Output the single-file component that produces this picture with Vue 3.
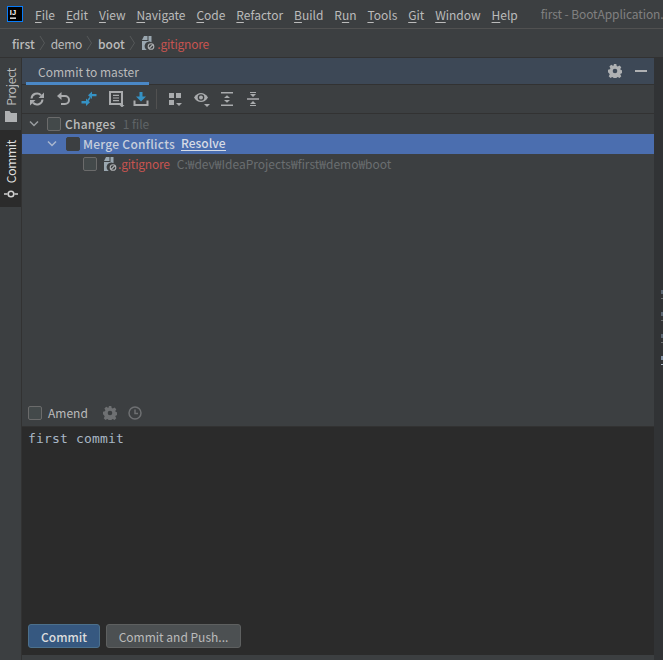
<script setup>
const menus = [
  ['F', 'ile'], ['E', 'dit'], ['V', 'iew'], ['N', 'avigate'], ['C', 'ode'], ['R', 'efactor'],
  ['B', 'uild'], ['R', 'un', 1], ['T', 'ools'], ['G', 'it'], ['W', 'indow'], ['H', 'elp']
]
</script>

<template>
  <div class="app">
    <header class="menubar">
      <svg class="logo" width="16" height="16" viewBox="0 0 16 16">
        <rect x="0.5" y="0.5" width="15" height="15" fill="#000" stroke="#087cfa" />
        <rect x="3" y="11.500" width="6" height="1.300" fill="#fff" />
        <text x="2.800" y="8.600" font-size="7.500" font-weight="700" font-family="Liberation Sans" fill="#fff">IJ</text>
      </svg>
      <nav class="menus">
        <span v-for="m in menus" :key="m[0] + m[1]" class="menu">
          <template v-if="m[2]">R<u>u</u>n</template>
          <template v-else><u>{{ m[0] }}</u>{{ m[1] }}</template>
        </span>
      </nav>
      <span class="title">first - BootApplication.</span>
    </header>

    <div class="crumbs">
      <b>first</b>
      <svg class="sep" width="7" height="16" viewBox="0 0 7 16"><path d="M1 1l4.500 7L1 15" fill="none" stroke="#555859" /></svg>
      <span class="demo">demo</span>
      <svg class="sep" width="7" height="16" viewBox="0 0 7 16"><path d="M1 1l4.500 7L1 15" fill="none" stroke="#555859" /></svg>
      <b>boot</b>
      <svg class="sep" width="7" height="16" viewBox="0 0 7 16"><path d="M1 1l4.500 7L1 15" fill="none" stroke="#555859" /></svg>
      <svg class="file" width="14" height="16" viewBox="0 0 14 16">
        <path d="M3 1h3.500v4H1zM7.500 1l3 0v6.200a4 4 0 0 0-4.700 7.800H1V6h6.500z" fill="#9aa7b0" />
        <circle cx="10" cy="11.500" r="2.800" fill="none" stroke="#afb1b3" stroke-width="1.100" />
        <path d="M8 13.500l4-4" stroke="#afb1b3" stroke-width="1.100" />
      </svg>
      <span class="red">.gitignore</span>
    </div>

    <div class="body">
      <aside class="strip">
        <div class="vtab">
          <span>Project</span>
          <svg width="14" height="12" viewBox="0 0 14 12"><path d="M1 0h4.500l1.500 2h6v9H1z" fill="#afb1b3" /></svg>
        </div>
        <div class="vtab active">
          <span>Commit</span>
          <svg width="14" height="12" viewBox="0 0 14 12">
            <circle cx="7" cy="6" r="2.800" fill="none" stroke="#d0d0d0" stroke-width="1.600" />
            <path d="M0 6h3.500M10.500 6H14" stroke="#d0d0d0" stroke-width="1.600" />
          </svg>
        </div>
      </aside>

      <main class="panel">
        <div class="tabhead">
          <div class="tab">Commit to master</div>
          <div class="headicons">
            <svg width="14" height="14" viewBox="0 0 14 14">
              <path d="M5.700 0h2.600l.4 1.900 1.100.5 1.700-1 1.800 1.800-1 1.700.5 1.100 1.900.4v2.600l-1.900.4-.5 1.100 1 1.700-1.800 1.800-1.700-1-1.100.5-.4 1.900H5.700l-.4-1.900-1.100-.5-1.700 1-1.800-1.800 1-1.700-.5-1.100L0 8.300V5.700l1.900-.4.500-1.100-1-1.700 1.800-1.800 1.700 1 1.100-.5z" fill="#afb1b3" />
              <circle cx="7" cy="7" r="2.300" fill="#3d4856" />
            </svg>
            <svg width="12" height="14" viewBox="0 0 12 14"><rect y="6" width="12" height="2" fill="#afb1b3" /></svg>
          </div>
        </div>

        <div class="toolbar">
          <span class="slot">
            <svg width="16" height="16" viewBox="0 0 16 16" fill="none" stroke="#a9abad" stroke-width="2">
              <path d="M2.500 7.500a5.500 5.500 0 0 1 9.500-3.300M13.500 8.500a5.500 5.500 0 0 1-9.500 3.300" />
              <path d="M9.500 7H15V1.500zM6.500 9H1v5.500z" fill="#a9abad" stroke="none" />
            </svg>
          </span>
          <span class="slot">
            <svg width="16" height="16" viewBox="0 0 16 16" fill="none">
              <path d="M5 5h5a4 4 0 0 1 0 8H6" stroke="#a9abad" stroke-width="2" />
              <path d="M6.500 1v8L2 5z" fill="#a9abad" />
            </svg>
          </span>
          <span class="slot">
            <svg width="16" height="16" viewBox="0 0 16 16" fill="#3592c4">
              <path d="M11 .5V8L7 4.200zM11 3h4.500v2.300H11zM5 7.500V15l4-3.800zM.500 10h4.500v2.500H.500z" />
              <path d="M9 6.500L7 9.500" stroke="#3592c4" stroke-width="1.500" />
            </svg>
          </span>
          <span class="slot shifted">
            <svg width="16" height="16" viewBox="0 0 16 16">
              <path d="M1 1h12v12H1z" fill="none" stroke="#a9abad" stroke-width="2" />
              <path d="M4 4.300h6M4 7h6M4 9.700h6" stroke="#a9abad" stroke-width="1.200" />
              <path d="M10.500 14h5L13 16.500z" fill="#a9abad" />
            </svg>
          </span>
          <span class="slot">
            <svg width="16" height="16" viewBox="0 0 16 16">
              <path d="M6.500 1h3v4.500H13L8 10.500l-5-5h3.500z" fill="#3592c4" />
              <path d="M1.500 9.500v4.500h13V9.500" fill="none" stroke="#a9abad" stroke-width="2" />
            </svg>
          </span>
          <i class="divider"></i>
          <span class="slot">
            <svg width="16" height="16" viewBox="0 0 16 16">
              <path d="M1 2h5v5H1zM8 2h5v5H8zM1 9h5v5H1z" fill="#a9abad" />
              <path d="M8 12h6l-3 3z" fill="#a9abad" />
            </svg>
          </span>
          <span class="slot narrow">
            <svg width="16" height="16" viewBox="0 0 16 16">
              <path d="M0 6.500c3.500-6 10.500-6 14 0-3.500 6-10.500 6-14 0z" fill="#a9abad" />
              <circle cx="7" cy="6.500" r="3.300" fill="#3c3f41" />
              <circle cx="7" cy="6.500" r="2" fill="#a9abad" />
              <path d="M10 13h6l-3 3z" fill="#a9abad" />
            </svg>
          </span>
          <span class="slot narrow">
            <svg width="14" height="16" viewBox="0 0 14 16" fill="#a9abad">
              <path d="M1 1h12v1.500H1zM1 13.500h12V15H1zM7 4.200l3 2.700H4zM7 11.800l-3-2.700h6z" />
            </svg>
          </span>
          <span class="slot narrow">
            <svg width="14" height="16" viewBox="0 0 14 16" fill="#a9abad">
              <path d="M1 7.200h12v1.500H1zM7 6L4 3h6zM7 10l3 3H4zM4 1h6v.9H4zM4 14.100h6v.9H4z" />
            </svg>
          </span>
        </div>

        <div class="tree">
          <div class="row first">
            <svg class="chev" width="10" height="8" viewBox="0 0 10 8"><path d="M1 1.500l4 4 4-4" fill="none" stroke="#9a9da0" stroke-width="1.500" /></svg>
            <span class="check"></span>
            <span class="strong txt">Changes</span>
            <span class="dim txt">1 file</span>
          </div>
          <div class="row selected">
            <svg class="chev" width="10" height="8" viewBox="0 0 10 8"><path d="M1 1.500l4 4 4-4" fill="none" stroke="#a9b7cf" stroke-width="1.500" /></svg>
            <span class="check dark"></span>
            <span class="sel txt">Merge Conflicts</span>
            <span class="resolve txt">Resolve</span>
          </div>
          <div class="row leaf">
            <span class="check"></span>
            <svg class="file" width="14" height="16" viewBox="0 0 14 16">
              <path d="M3 1h3.500v4H1zM7.500 1l3 0v6.200a4 4 0 0 0-4.700 7.800H1V6h6.500z" fill="#9aa7b0" />
              <circle cx="10" cy="11.500" r="2.800" fill="none" stroke="#afb1b3" stroke-width="1.100" />
              <path d="M8 13.500l4-4" stroke="#afb1b3" stroke-width="1.100" />
            </svg>
            <span class="red txt">.gitignore</span>
            <span class="path txt">C:₩dev₩IdeaProjects₩first₩demo₩boot</span>
          </div>
        </div>

        <div class="amend">
          <span class="check"></span>
          <span class="amendlabel">Amend</span>
          <svg width="14" height="14" viewBox="0 0 14 14">
            <path d="M5.700 0h2.600l.4 1.900 1.100.5 1.700-1 1.800 1.800-1 1.700.5 1.100 1.900.4v2.600l-1.900.4-.5 1.100 1 1.700-1.800 1.800-1.700-1-1.100.5-.4 1.900H5.700l-.4-1.900-1.100-.5-1.700 1-1.800-1.800 1-1.700-.5-1.100L0 8.300V5.700l1.900-.4.500-1.100-1-1.700 1.800-1.800 1.700 1 1.100-.5z" fill="#6e7072" />
            <circle cx="7" cy="7" r="2.300" fill="#3c3f41" />
          </svg>
          <svg width="14" height="14" viewBox="0 0 14 14" fill="none" stroke="#6e7072" stroke-width="1.500">
            <circle cx="7" cy="7" r="6" />
            <path d="M7 3.500V7.500h3" />
          </svg>
        </div>

        <div class="editor">
          <div class="message">first commit</div>
          <div class="buttons">
            <button class="btn primary">Commit</button>
            <button class="btn">Commit and Push...</button>
          </div>
        </div>
        <div class="bottom"></div>
      </main>

      <aside class="rightstrip">
        <i></i><i></i><i></i><i class="bright"></i>
      </aside>
    </div>
  </div>
</template>

<style scoped>
.app {
  width: 663px;
  height: 660px;
  display: flex;
  flex-direction: column;
  overflow: hidden;
  background: #3c3f41;
  color: #bbbbbb;
  font: 12px "Noto Sans CJK KR", "Noto Sans", sans-serif;
}
svg { flex: none; display: block; }
.menubar {
  height: 28px;
  flex: none;
  display: flex;
  align-items: center;
  padding-left: 7px;
  border-bottom: 1px solid #515151;
  white-space: nowrap;
}
.logo { margin-right: 12px; }
.menus { display: flex; gap: 10.900px; }
.menu u { text-underline-offset: 2px; }
.title { margin-left: 23px; color: #808080; margin-top: -2px; letter-spacing: -0.1px; }
.crumbs {
  height: 28px;
  flex: none;
  display: flex;
  align-items: center;
  padding-left: 12px;
  gap: 4.500px;
  border-bottom: 1px solid #323232;
  white-space: nowrap;
}
.crumbs b { font-weight: 500; }
.demo { letter-spacing: -0.3px; }
.crumbs .file { margin-right: -2px; }
.red { color: #c75450; letter-spacing: -0.2px; }
.body { flex: 1; display: flex; min-height: 0; }
.strip {
  width: 22px;
  flex: none;
  display: flex;
  flex-direction: column;
  border-right: 1px solid #323232;
  box-sizing: border-box;
}
.vtab {
  height: 72px;
  display: flex;
  flex-direction: column;
  align-items: center;
  gap: 5px;
  box-sizing: border-box;
}
.vtab span {
  writing-mode: vertical-rl;
  transform: rotate(180deg);
  line-height: 21px;
  margin-top: 10px;
  letter-spacing: -0.3px;
}
.vtab.active {
  height: 77px;
  background: #2b2b2b;
  color: #dddddd;
}
.panel {
  flex: 1;
  min-width: 0;
  display: flex;
  flex-direction: column;
}
.tabhead {
  height: 26px;
  flex: none;
  display: flex;
  justify-content: space-between;
  background: #3d4856;
  border-bottom: 1px solid #323232;
}
.tab {
  width: 123px;
  margin-left: 4px;
  padding-left: 12px;
  box-sizing: border-box;
  border-bottom: 3px solid #4a88c7;
  line-height: 28px;
  height: 27px;
}
.headicons {
  display: flex;
  align-items: center;
  gap: 13px;
  padding-right: 7px;
}
.toolbar {
  height: 28px;
  flex: none;
  display: flex;
  align-items: center;
  padding-left: 2px;
  border-bottom: 1px solid #323232;
}
.slot {
  width: 26px;
  flex: none;
  display: flex;
  justify-content: center;
}
.slot.narrow { width: 25.500px; }
.slot.shifted { padding-left: 3px; width: 23px; }
.toolbar .divider {
  width: 1px;
  height: 20px;
  background: #515151;
  margin: 0 6px 0 2px;
}
.tree { flex: 1; }
.row {
  height: 20px;
  display: flex;
  align-items: center;
  white-space: nowrap;
}
.txt { margin-top: -2px; }
.first { padding-left: 7px; }
.selected { padding-left: 25px; background: #4b6eaf; }
.leaf { padding-left: 61px; }
.chev { margin-right: 8px; }
.selected .chev { margin-right: 9px; }
.check {
  width: 12px;
  height: 12px;
  border: 1px solid #6b6b6b;
  border-radius: 2px;
  background: #43494a;
  flex: none;
}
.check.dark { background: #3c3f41; border-color: #3c3f41; }
.strong { margin-left: 4px; font-weight: 500; letter-spacing: 0.25px; }
.sel { margin-left: 3px; color: #c8cfdc; font-weight: 500; letter-spacing: 0.27px; }
.dim { margin-left: 7px; color: #5f6467; }
.resolve {
  margin-left: 6px;
  font-weight: 500;
  color: #d6dbe5;
  border-bottom: 1px solid #d6dbe5;
  line-height: 14px;
}
.leaf .file { margin: 0 1px 0 6px; }
.path { margin-left: 7px; color: #6a6e70; }
.amend {
  height: 28px;
  flex: none;
  box-sizing: border-box;
  display: flex;
  align-items: center;
  padding-left: 6px;
  border-bottom: 1px solid #323232;
}
.amendlabel { margin: 0 15px 0 6px; }
.amend svg { margin-right: 11px; }
.editor {
  height: 228px;
  flex: none;
  box-sizing: border-box;
  display: flex;
  flex-direction: column;
  justify-content: space-between;
  background: #2b2b2b;
  padding: 3px 6px 7px;
}
.message {
  font: 13px "DejaVu Sans Mono", "Liberation Mono", monospace;
  letter-spacing: 0.17px;
  line-height: 18px;
  color: #a9b7c6;
}
.buttons { display: flex; gap: 6px; }
.btn {
  height: 24px;
  box-sizing: border-box;
  border: 1px solid #5e6060;
  border-radius: 3px;
  background: #4c5052;
  color: #bbbbbb;
  font: inherit;
  padding: 0;
  width: 135px;
  white-space: nowrap;
}
.primary {
  width: 72px;
  background: #365880;
  border-color: #4c708c;
  font-weight: 500;
  color: #dcdcdc;
}
.bottom { height: 5px; flex: none; background: #3c3f41; }
.rightstrip {
  width: 9px;
  flex: none;
  display: flex;
  flex-direction: column;
  align-items: flex-end;
  gap: 13px;
  padding-top: 232px;
  background: #313335;
  box-sizing: border-box;
}
.rightstrip i {
  width: 2px;
  height: 9px;
  background: linear-gradient(#5a6672 0 4px, transparent 4px 8px, #6a6e70 8px);
}
.rightstrip .bright { background: linear-gradient(#7f8fa3 0 4px, transparent 4px 8px, #a9b7c6 8px); }
</style>
